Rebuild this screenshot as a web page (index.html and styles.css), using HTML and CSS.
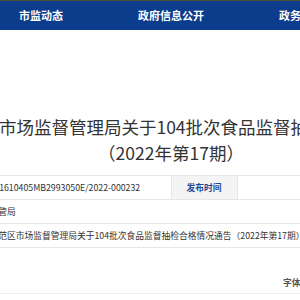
FILE: index.html
```html
<!DOCTYPE html>
<html lang="zh-CN">
<head>
    <meta charset="UTF-8">
    <meta name="viewport" content="width=device-width, initial-scale=1.0">
    <title>食品监督抽检合格情况通告</title>
    <link rel="stylesheet" href="styles.css">
</head>
<body>
    <div class="page">
        <div class="banner-edge"></div>
        <ul class="nav">
            <li>网站首页</li>
            <li>机构概况</li>
            <li>市监动态</li>
            <li>政府信息公开</li>
            <li>政务服务</li>
            <li>互动交流</li>
            <li>专题专栏</li>
        </ul>

        <h1 class="title">杨凌示范区市场监督管理局关于104批次食品监督抽检合格情况通告（2022年第17期）</h1>

        <table class="info">
            <tr>
                <th>索引号</th>
                <td class="center">11610405MB2993050E/2022-000232</td>
                <th>发布时间</th>
                <td class="center">2022-06-15</td>
            </tr>
            <tr>
                <th>发布机构</th>
                <td colspan="3">市场监管局</td>
            </tr>
            <tr>
                <th>标题</th>
                <td colspan="3">杨凌示范区市场监督管理局关于104批次食品监督抽检合格情况通告（2022年第17期）</td>
            </tr>
        </table>

        <div class="toolbar">
            <div class="tools">
                <span class="label">字体：</span>
                <span>大</span>
                <span>中</span>
                <span>小</span>
                <span class="sep">打印本页</span>
                <span>关闭窗口</span>
            </div>
        </div>
    </div>
</body>
</html>
```
FILE: styles.css
```css
body {
    margin: 0;
    padding: 0;
    overflow: hidden;
    background-color: #fff;
    font-family: "Noto Sans CJK SC", "Noto Sans", sans-serif;
    color: #333;
}

.page {
    width: 1000px;
    margin-left: -329px;
}

.banner-edge {
    height: 1px;
    background-color: #4d4b3c;
}

.nav {
    display: flex;
    justify-content: center;
    margin: 0;
    padding: 0;
    list-style: none;
    height: 29px;
    background-color: #0c3d8c;
}

.nav li {
    width: 130px;
    text-align: center;
    line-height: 29px;
    font-size: 11px;
    font-weight: bold;
    color: #fff;
}

.title {
    max-width: 525px;
    margin: 84px auto 0;
    font-size: 17.5px;
    font-weight: normal;
    line-height: 26px;
    text-align: center;
    color: #333;
}

.info {
    width: 548px;
    margin: 9px auto 0;
    border-collapse: collapse;
    table-layout: fixed;
    font-size: 8.75px;
}

.info th,
.info td {
    height: 23px;
    padding: 0 8px;
    border: 1px solid #e6e6e6;
    text-align: left;
    white-space: nowrap;
}

.info th {
    width: 49px;
    background-color: #f4f4f4;
    color: #1d4b98;
    text-align: center;
}

.info td.center {
    text-align: center;
}

.toolbar {
    margin-top: 25px;
    border-bottom: 1px solid #ededed;
}

.tools {
    display: flex;
    gap: 8px;
    padding-left: 612px;
    line-height: 20px;
    font-size: 8.75px;
    color: #555;
}

.tools .label {
    font-weight: bold;
}

.tools .sep {
    margin-left: 14px;
}
```
